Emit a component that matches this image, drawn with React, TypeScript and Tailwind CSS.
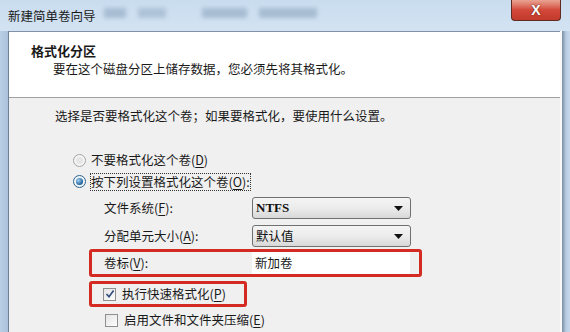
import React from 'react';

const cjk = { fontFamily: '"Noto Sans CJK SC", "Noto Sans", sans-serif' };

function Key({ k }: { k: string }) {
  return (
    <span>
      (<span className="underline underline-offset-2">{k}</span>)
    </span>
  );
}

function Radio({ checked }: { checked?: boolean }) {
  return (
    <span
      className={`flex h-[13px] w-[13px] items-center justify-center rounded-full border ${
        checked ? 'border-[#2c628b] bg-[#eef3f8]' : 'border-[#a5a5a5] bg-[#f4f4f4]'
      }`}
    >
      {checked ? (
        <span className="h-[7px] w-[7px] rounded-full bg-[radial-gradient(circle_at_35%_35%,#9fd2f5,#1f5e96_70%)]" />
      ) : (
        <span className="h-[7px] w-[7px] rounded-full bg-[#e6e6e6]" />
      )}
    </span>
  );
}

function Checkbox({ checked }: { checked?: boolean }) {
  return (
    <span className="flex h-[13px] w-[13px] items-center justify-center border border-[#8e8f8f] bg-gradient-to-br from-[#e4e4e4] to-[#fdfdfd]">
      {checked && (
        <svg width="10" height="10" viewBox="0 0 10 10">
          <path d="M1.5 5 L4 7.8 L8.6 1.6" fill="none" stroke="#2b4a7a" strokeWidth="1.6" />
        </svg>
      )}
    </span>
  );
}

function Select({ value, serif }: { value: string; serif?: boolean }) {
  return (
    <div className="flex h-[22px] w-[159px] items-center justify-between rounded-[3px] border border-[#707070] bg-gradient-to-b from-[#f4f4f4] via-[#ececec] to-[#d8d8d8] pl-[3px] pr-[7px]">
      <span
        className={serif ? 'text-[13px] font-bold text-[#111]' : 'text-[12.5px] text-[#111]'}
        style={serif ? { fontFamily: '"Liberation Serif", serif' } : undefined}
      >
        {value}
      </span>
      <svg width="9" height="5" viewBox="0 0 9 5">
        <path d="M0 0 H9 L4.5 5 Z" fill="#111" />
      </svg>
    </div>
  );
}

export default function App() {
  return (
    <div className="flex h-[332px] w-[570px] flex-col overflow-hidden bg-[#c4d7ea] text-[12.5px] text-[#1a1a1a]" style={cjk}>
      {/* title bar */}
      <div className="flex h-[31px] shrink-0 bg-gradient-to-b from-[#c9dcee] to-[#d3e3f2]">
        <div className="flex flex-1 items-start pl-[8px] pt-[6px]">
          <span className="leading-[20px] text-[#1a1a1a]">新建简单卷向导</span>
          <div className="ml-[8px] mt-[2px] flex gap-[12px] opacity-60 blur-[2px]">
            <span className="h-[10px] w-[22px] bg-[#8ea6c0]" />
            <span className="h-[10px] w-[28px] bg-[#9ab0c8]" />
            <span className="ml-[24px] h-[10px] w-[45px] bg-[#8ea6c0]" />
            <span className="h-[10px] w-[58px] bg-[#8ea6c0]" />
          </div>
        </div>
        <div className="mr-[9px] flex h-[21px] w-[50px] items-center justify-center rounded-b-[4px] border border-t-0 border-[#5e2a22] bg-gradient-to-b from-[#e9a394] via-[#d2483a] to-[#c23a2c]">
          <span className="text-[14px] font-bold leading-none text-white [text-shadow:0_0_2px_#4a1a14]" style={{ fontFamily: '"Liberation Sans", sans-serif' }}>
            X
          </span>
        </div>
      </div>

      {/* client row */}
      <div className="flex flex-1">
        <div className="w-[9px] shrink-0 border-r border-[#6f8196] bg-gradient-to-r from-[#b9cfe5] to-[#a9c1da]" />
        <div className="flex flex-1 flex-col border-t border-[#8193a8]">
          {/* header */}
          <div className="h-[66px] shrink-0 border-b border-[#a0a0a0] bg-white pt-[10px]">
            <div className="pl-[22px] text-[13px] font-bold leading-[18px]">格式化分区</div>
            <div className="pl-[44px] leading-[18px]">要在这个磁盘分区上储存数据，您必须先将其格式化。</div>
          </div>

          {/* body */}
          <div className="flex flex-1 flex-col bg-[#f0f0f0]">
            <div className="pl-[46px] pt-[9px] leading-[18px]">选择是否要格式化这个卷；如果要格式化，要使用什么设置。</div>

            <div className="mt-[25px] flex h-[21px] items-center gap-[5px] pl-[64px]">
              <Radio />
              <span>
                不要格式化这个卷<Key k="D" />
              </span>
            </div>
            <div className="flex h-[21px] items-center gap-[5px] pl-[64px]">
              <Radio checked />
              <span className="outline-1 outline-dotted outline-[#333] leading-[16px]">
                按下列设置格式化这个卷<Key k="O" />:
              </span>
            </div>

            <div className="mt-[5px] flex h-[22px] items-center pl-[95px]">
              <span className="w-[148px]">
                文件系统<Key k="F" />:
              </span>
              <Select value="NTFS" serif />
            </div>
            <div className="mt-[6px] flex h-[22px] items-center pl-[95px]">
              <span className="w-[148px]">
                分配单元大小<Key k="A" />:
              </span>
              <Select value="默认值" />
            </div>

            <div className="ml-[80px] mt-[2px] flex h-[28px] w-[333px] items-center rounded-[3px] border-[3px] border-[#d32a22] pl-[12px]">
              <span className="w-[148px]">
                卷标<Key k="V" />:
              </span>
              <div className="flex h-[22px] w-[158px] items-center bg-white pl-[3px]">新加卷</div>
            </div>

            <div className="ml-[80px] mt-[4px] flex h-[26px] w-[158px] items-center gap-[6px] rounded-[3px] border-[3px] border-[#d32a22] pl-[11px]">
              <Checkbox checked />
              <span>
                执行快速格式化<Key k="P" />
              </span>
            </div>

            <div className="mt-[3px] flex h-[20px] items-center gap-[6px] pl-[96px]">
              <Checkbox />
              <span>
                启用文件和文件夹压缩<Key k="E" />
              </span>
            </div>
          </div>
        </div>
        <div className="w-[10px] shrink-0 border-l-2 border-l-[#fafafa] bg-gradient-to-r from-[#7c8ea3] via-[#b7cde4] to-[#c6d8ea]" />
      </div>
    </div>
  );
}
